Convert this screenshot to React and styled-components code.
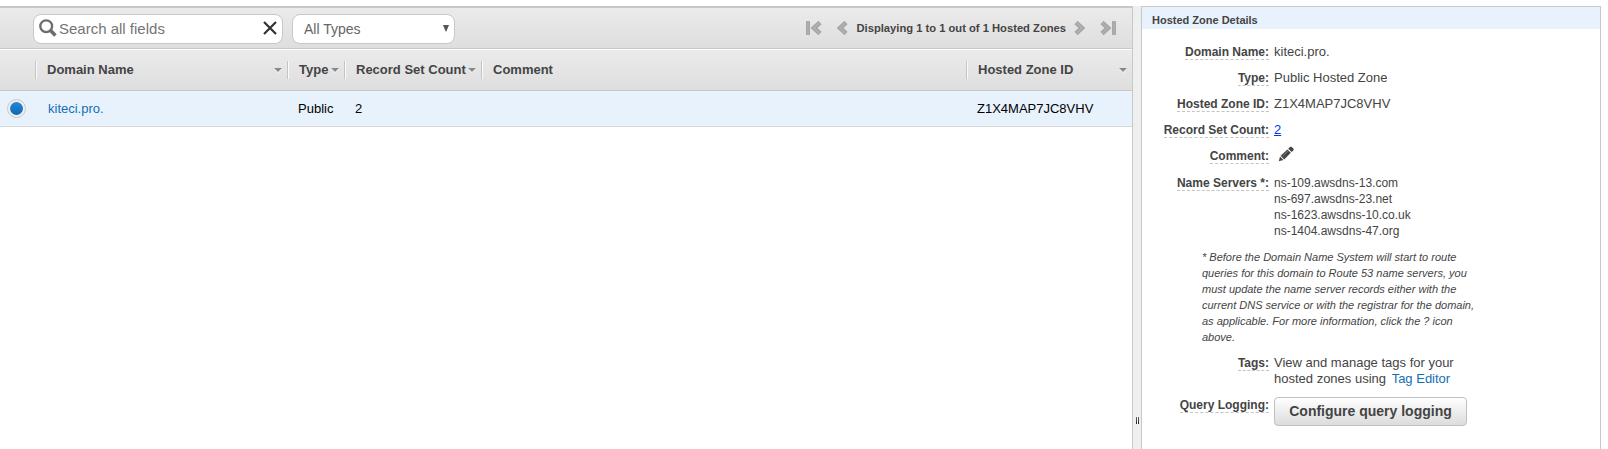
import React from "react";
import styled, { createGlobalStyle } from "styled-components";

const GlobalStyle = createGlobalStyle`
  * { box-sizing: border-box; }
  html, body, #root { height: 100%; }
  body {
    margin: 0;
    background: #fff;
    overflow: hidden;
    font-family: "Liberation Sans", Arial, Helvetica, sans-serif;
    font-size: 13px;
    line-height: 16px;
    color: #444;
  }
`;

const Page = styled.main`
  display: flex;
  height: 100%;
  padding-top: 6px;
`;

const ListPane = styled.section`
  width: 1133px;
  flex: none;
  border-top: 2px solid #c8c8c8;
  border-right: 1px solid #c8c8c8;
`;

const Toolbar = styled.div`
  display: flex;
  align-items: center;
  height: 41px;
  padding: 0 16px 0 33px;
  background: linear-gradient(#ebebeb, #dedede);
  border-bottom: 1px solid #c8c8c8;
`;

const Field = styled.div`
  display: flex;
  align-items: center;
  width: ${(p) => p.$width}px;
  height: 30px;
  margin: 1px 9px 0 0;
  background: #fff;
  border: 1px solid #c8c8c8;
  border-radius: 8px;
`;

const SearchInput = styled.input`
  flex: 1;
  min-width: 0;
  height: 28px;
  margin: 0;
  padding: 0 0 0 2px;
  border: 0;
  outline: 0;
  background: none;
  font: 15px "Liberation Sans", Arial, sans-serif;
  color: #444;
  &::placeholder { color: #757575; opacity: 1; }
`;

const SearchIcon = styled.svg`
  flex: none;
  margin: -1px 0 0 5px;
`;

const ClearIcon = styled.svg`
  flex: none;
  margin: -1px 5px 0 0;
`;

const SelectText = styled.span`
  flex: 1;
  padding-left: 11px;
  font-size: 14px;
  color: #666;
`;

const SelectArrow = styled.svg`
  margin-right: 5px;
`;

const Pager = styled.div`
  display: flex;
  align-items: center;
  margin-left: auto;
  font-size: 11.2px;
  font-weight: bold;
`;

const PagerText = styled.span`
  margin: 0 8px 0 9px;
`;

const PagerIcon = styled.svg`
  display: block;
  margin-right: ${(p) => p.$gap || 0}px;
`;

const GridRow = styled.div`
  display: grid;
  grid-template-columns: 35px 252px 57px 137px 485px 166px;
  align-items: center;
`;

const HeadRow = styled(GridRow)`
  height: 42px;
  background: linear-gradient(#ebebeb, #dedede);
  border-top: 1px solid #fff;
  border-bottom: 1px solid #c8c8c8;
  font-weight: bold;
`;

const HeadCell = styled.div`
  display: flex;
  align-items: center;
  justify-content: space-between;
  height: 18px;
  padding: 0 5px 0 11px;
  border-left: 1px solid #c4c4c4;
  box-shadow: inset 1px 0 #fafafa;
  white-space: nowrap;
`;

const BodyRow = styled(GridRow)`
  height: 36px;
  background: #e8f2fd;
  border-bottom: 1px solid #d9d9d9;
  color: #000;
`;

const BodyCell = styled.div`
  padding-left: ${(p) => p.$pad || 11}px;
`;

const Radio = styled.span`
  display: block;
  width: 19px;
  height: 19px;
  margin-left: 7px;
  padding: 2px;
  border: 1px solid #c8c8c8;
  border-radius: 50%;
  background: #f0f0f0;
  &::before {
    content: "";
    display: block;
    height: 13px;
    border-radius: 50%;
    background: linear-gradient(#2b86d6, #0b69b5);
  }
`;

const Link = styled.a`
  margin-left: ${(p) => p.$gap || 0}px;
  color: ${(p) => (p.$plain ? "#0033ee" : "#146eb4")};
  text-decoration: ${(p) => (p.$plain ? "underline" : "none")};
`;

const Splitter = styled.div`
  flex: none;
  width: 8px;
  padding: 411px 0 0 3px;
  background: #eef0f0;
`;

const Grip = styled.div`
  width: 3px;
  height: 7px;
  background: linear-gradient(90deg, transparent 1px, #fff 1px, #fff 2px, transparent 2px),
    linear-gradient(#666, #222);
`;

const DetailsPane = styled.aside`
  width: 460px;
  flex: none;
  border: solid #c8c8c8;
  border-width: 1px 1px 0;
`;

const DetailsTitle = styled.h2`
  margin: 0;
  height: 22px;
  padding-left: 10px;
  background: #e8f2fd;
  font-size: 11px;
  line-height: 26px;
`;

const DetailRow = styled.div`
  display: grid;
  grid-template-columns: 127px 1fr;
  column-gap: 5px;
  margin-top: ${(p) => p.$top ?? 10}px;
`;

const LabelCell = styled.div`
  height: 16px;
  text-align: right;
  font-size: 12px;
  font-weight: bold;
  color: #444;
`;

const Label = styled.span`
  border-bottom: 1px dashed #c4c4c4;
`;

const Value = styled.div`
  max-width: 200px;
  font-size: ${(p) => (p.$small ? 12 : 13)}px;
  min-height: 16px;
`;

const Note = styled.p`
  width: 276px;
  margin: 10px 0 0 60px;
  font-size: 11px;
  font-style: italic;
`;

const Pencil = styled.svg`
  display: block;
  height: 16px;
  margin: -2px 0 2px 4px;
`;

const ActionButton = styled.button`
  display: block;
  width: 193px;
  height: 29px;
  padding: 0 0 1px;
  border: 1px solid #c0c0c0;
  border-radius: 4px;
  background: linear-gradient(#fff, #dcdcdc);
  font: bold 14px "Liberation Sans", Arial, sans-serif;
  color: #444;
`;

const Caret = () => (
  <svg width="8" height="5" viewBox="0 0 8 5">
    <path d="M0 .5h8L4 5z" fill="#fff" />
    <path d="M0 0h8L4 4z" fill="#888" />
  </svg>
);

function Chevron({ flip, bar, gap }) {
  return (
    <PagerIcon $gap={gap} width={bar ? 16 : 11} height="14" viewBox={bar ? "0 0 16 14" : "5 0 11 14"}>
      <g transform={flip ? (bar ? "translate(16 0) scale(-1 1)" : "translate(21 0) scale(-1 1)") : undefined}>
        {bar && <path d="M.5.5h3v13h-3z" fill="#adadad" stroke="#a6a6a6" />}
        <path d="M14 1.5 8 7l6 5.5" fill="none" stroke="#a3a3a3" strokeWidth="4.6" />
        <path d="M14 1.5 8 7l6 5.5" fill="none" stroke="#b0b0b0" strokeWidth="2" />
      </g>
    </PagerIcon>
  );
}

function Detail({ label, top, small, children }) {
  return (
    <DetailRow $top={top}>
      <LabelCell><Label>{label}:</Label></LabelCell>
      <Value $small={small}>{children}</Value>
    </DetailRow>
  );
}

const nameServers = [
  "ns-109.awsdns-13.com",
  "ns-697.awsdns-23.net",
  "ns-1623.awsdns-10.co.uk",
  "ns-1404.awsdns-47.org",
];

export default function App() {
  return (
    <>
      <GlobalStyle />
      <Page>
        <ListPane>
          <Toolbar>
            <Field $width={250}>
              <SearchIcon width="18" height="18" viewBox="0 0 18 18" fill="none" stroke="#6c6c6c">
                <circle cx="7.2" cy="7.2" r="5.9" strokeWidth="2.3" />
                <path d="M11.6 11.6 16.4 16.4" strokeWidth="3.6" />
              </SearchIcon>
              <SearchInput placeholder="Search all fields" />
              <ClearIcon width="14" height="14" viewBox="0 0 14 14" stroke="#333" strokeWidth="2.2">
                <path d="m1 1 12 12M13 1 1 13" />
              </ClearIcon>
            </Field>
            <Field $width={163}>
              <SelectText>All Types</SelectText>
              <SelectArrow width="6" height="7" viewBox="0 0 6 7"><path d="M0 0h6L3.3 6.5H2.7z" fill="#555" /></SelectArrow>
            </Field>
            <Pager>
              <Chevron bar gap={15} />
              <Chevron />
              <PagerText>Displaying 1 to 1 out of 1 Hosted Zones</PagerText>
              <Chevron flip gap={15} />
              <Chevron flip bar />
            </Pager>
          </Toolbar>
          <HeadRow>
            <span />
            <HeadCell>Domain Name<Caret /></HeadCell>
            <HeadCell>Type<Caret /></HeadCell>
            <HeadCell>Record Set Count<Caret /></HeadCell>
            <HeadCell>Comment</HeadCell>
            <HeadCell>Hosted Zone ID<Caret /></HeadCell>
          </HeadRow>
          <BodyRow>
            <Radio />
            <BodyCell $pad={13}><Link>kiteci.pro.</Link></BodyCell>
            <BodyCell>Public</BodyCell>
            <BodyCell>2</BodyCell>
            <BodyCell />
            <BodyCell>Z1X4MAP7JC8VHV</BodyCell>
          </BodyRow>
        </ListPane>
        <Splitter><Grip /></Splitter>
        <DetailsPane>
          <DetailsTitle>Hosted Zone Details</DetailsTitle>
          <Detail label="Domain Name" top={15}>kiteci.pro.</Detail>
          <Detail label="Type">Public Hosted Zone</Detail>
          <Detail label="Hosted Zone ID">Z1X4MAP7JC8VHV</Detail>
          <Detail label="Record Set Count"><Link $plain>2</Link></Detail>
          <Detail label="Comment">
            <Pencil width="16" height="16" viewBox="0 0 16 16" fill="#444">
              <path d="M.8 15.2 2 10.6l3.4 3.4zM2.6 9.8 9.4 3.4l3.4 3.4-6.6 6.6zM10.2 2.7l1.8-1.7q1-.7 1.8.1l1.5 1.5q.8.9 0 1.8L13.6 6z" />
              <path d="m4.6 10.1 5.4-5.2" stroke="#999" strokeWidth=".7" />
            </Pencil>
          </Detail>
          <Detail label="Name Servers *" top={11} small>
            {nameServers.map((ns) => <div key={ns}>{ns}</div>)}
          </Detail>
          <Note>
            * Before the Domain Name System will start to route queries for this domain to Route 53 name servers, you
            must update the name server records either with the current DNS service or with the registrar for the
            domain, as applicable. For more information, click the ? icon above.
          </Note>
          <Detail label="Tags">
            <div>View and manage tags for your</div>
            <div>hosted zones using <Link $gap={2}>Tag Editor</Link></div>
          </Detail>
          <Detail label="Query Logging"><ActionButton>Configure query logging</ActionButton></Detail>
        </DetailsPane>
      </Page>
    </>
  );
}
